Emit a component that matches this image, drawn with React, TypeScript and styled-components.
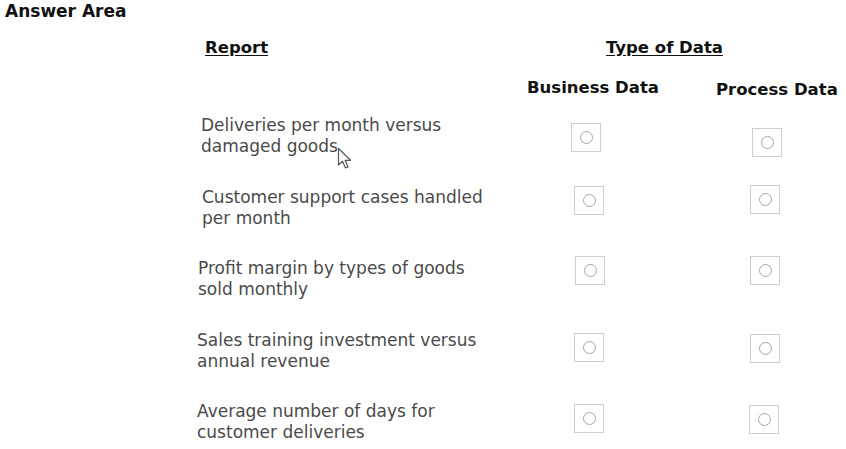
import React from "react";
import styled, { createGlobalStyle } from "styled-components";

const Global = createGlobalStyle`
  html, body { margin: 0; padding: 0; background: #fff; }
  body { font-family: "DejaVu Sans", Verdana, sans-serif; }
`;

const Page = styled.div`
  position: relative;
  width: 846px;
  height: 449px;
  overflow: hidden;
  background: #fff;
`;

const Title = styled.div`
  font-weight: bold;
  font-size: 17px;
  line-height: 20px;
  color: #111;
  padding: 1px 0 0 5px;
  height: 21px;
`;

const Table = styled.div`
  display: grid;
  grid-template-columns: 272px 131px 122px;
  column-gap: 58px;
  padding-left: 197px;
`;

const Head = styled.div<{ $pad: number; $span?: number; $top: number }>`
  grid-column: span ${(p) => p.$span ?? 1};
  padding-left: ${(p) => p.$pad}px;
  padding-top: ${(p) => p.$top}px;
  font-weight: bold;
  font-size: 16.5px;
  line-height: 19px;
  color: #111;
  white-space: nowrap;
`;

const Underlined = styled.span`
  text-decoration: underline;
  text-underline-offset: 2px;
`;

const Spacer = styled.div`
  grid-column: span 3;
  height: 16px;
`;

const Label = styled.div<{ $pad: number }>`
  padding-left: ${(p) => p.$pad}px;
  font-size: 17px;
  line-height: 21px;
  color: #4a4a4a;
  height: 71.5px;
  white-space: nowrap;
`;

const Cell = styled.div<{ $pad: number }>`
  padding-left: ${(p) => p.$pad}px;
`;

const Box = styled.div<{ $dy: number }>`
  width: 28px;
  height: 27px;
  margin-top: ${(p) => p.$dy}px;
  border: 1px solid #cdcdcd;
  display: flex;
  align-items: center;
  justify-content: center;
`;

const Radio = styled.div`
  width: 11px;
  height: 11px;
  border-radius: 50%;
  border: 1.5px solid #a5a5a5;
`;

const Cursor = styled.svg`
  position: absolute;
  left: 337px;
  top: 147px;
`;

const rows = [
  { text: ["Deliveries per month versus", "damaged goods"], pad: 4, b: 8, p: 13, bx: 44, px: 36 },
  { text: ["Customer support cases handled", "per month"], pad: 5, b: -1, p: -2, bx: 47, px: 34 },
  { text: ["Profit margin by types of goods", "sold monthly"], pad: 1, b: -2, p: -2, bx: 48, px: 34 },
  { text: ["Sales training investment versus", "annual revenue"], pad: 0, b: 3, p: 4, bx: 47, px: 34 },
  { text: ["Average number of days for", "customer deliveries"], pad: 0, b: 3, p: 4, bx: 47, px: 33 },
];

export default function App() {
  return (
    <Page>
      <Global />
      <Title>Answer Area</Title>
      <Table>
        <Head $pad={8} $top={16}>
          <Underlined>Report</Underlined>
        </Head>
        <Head $pad={79} $span={2} $top={16}>
          <Underlined>Type of Data</Underlined>
        </Head>
        <Head $pad={0} $top={21}>{""}</Head>
        <Head $pad={0} $top={21}>Business Data</Head>
        <Head $pad={0} $top={23}>Process Data</Head>
        <Spacer />
        {rows.map((r, i) => (
          <React.Fragment key={i}>
            <Label $pad={r.pad}>
              {r.text[0]}
              <br />
              {r.text[1]}
            </Label>
            <Cell $pad={r.bx}>
              <Box $dy={r.b}>
                <Radio />
              </Box>
            </Cell>
            <Cell $pad={r.px}>
              <Box $dy={r.p}>
                <Radio />
              </Box>
            </Cell>
          </React.Fragment>
        ))}
      </Table>
      <Cursor width="16" height="24" viewBox="0 0 16 24">
        <path
          d="M1.5 1.5 L1.5 18 L5.5 14.2 L8.5 21 L11 19.9 L8.1 13.3 L13.5 13.3 Z"
          fill="#fff"
          stroke="#555"
          strokeWidth="1.2"
          strokeLinejoin="round"
        />
      </Cursor>
    </Page>
  );
}
